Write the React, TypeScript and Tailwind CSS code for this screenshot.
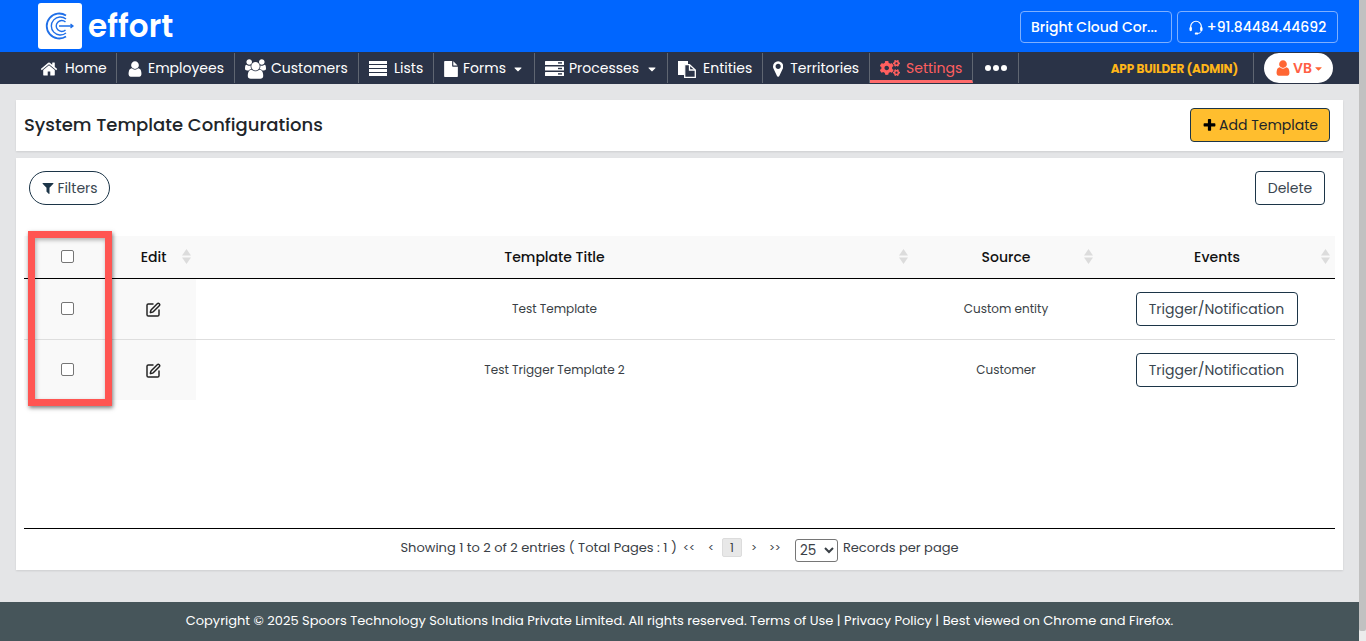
import React from "react";
import { FaCogs, FaCaretDown } from "react-icons/fa";
import { SquarePen } from "lucide-react";

const font = "font-['Poppins','Inter','Liberation_Sans',sans-serif]";

function Fa({ d, vb = "0 0 1792 1792", className = "" }: { d: string; vb?: string; className?: string }) {
  return (
    <svg viewBox={vb} fill="currentColor" className={`shrink-0 ${className}`}>
      <path d={d} />
    </svg>
  );
}

const P = {
  home: "M1472 992v480q0 26-19 45t-45 19h-384v-384h-256v384h-384q-26 0-45-19t-19-45v-480q0-1 .5-3t.5-3l575-474 575 474q1 2 1 6zm223-69l-62 74q-8 9-21 11h-3q-13 0-21-7l-692-577-692 577q-12 8-24 7-13-2-21-11l-62-74q-8-10-7-23.5t11-21.5l719-599q32-26 76-26t76 26l244 204v-195q0-14 9-23t23-9h192q14 0 23 9t9 23v408l219 182q10 8 11 21.5t-7 23.5z",
  user: "M1536 1399q0 109-62.5 187t-150.5 78h-854q-88 0-150.5-78t-62.5-187q0-85 8.5-160.5t31.5-152 58.5-131 94-89 134.5-34.5q131 128 313 128t313-128q76 0 134.5 34.5t94 89 58.5 131 31.5 152 8.5 160.5zm-256-887q0 159-112.5 271.5t-271.5 112.5-271.5-112.5-112.5-271.5 112.5-271.5 271.5-112.5 271.5 112.5 112.5 271.5z",
  users: "M593 896q-162 5-265 128h-134q-82 0-138-40.5t-56-118.5q0-353 124-353 6 0 43.5 21t97.5 42.5 119 21.5q67 0 133-23-5 37-5 66 0 139 81 256zm1071 637q0 120-73 189.5t-194 69.5h-874q-121 0-194-69.5t-73-189.5q0-53 3.5-103.5t14-109 26.5-108.5 43-97.5 62-81 85.5-53.5 111.5-20q10 0 43 21.5t73 48 107 48 135 21.5 135-21.5 107-48 73-48 43-21.5q61 0 111.5 20t85.5 53.5 62 81 43 97.5 26.5 108.5 14 109 3.5 103.5zm-1024-1277q0 106-75 181t-181 75-181-75-75-181 75-181 181-75 181 75 75 181zm704 384q0 159-112.5 271.5t-271.5 112.5-271.5-112.5-112.5-271.5 112.5-271.5 271.5-112.5 271.5 112.5 112.5 271.5zm576 225q0 78-56 118.5t-138 40.5h-134q-103-123-265-128 81-117 81-256 0-29-5-66 66 23 133 23 59 0 119-21.5t97.5-42.5 43.5-21q124 0 124 353zm-128-609q0 106-75 181t-181 75-181-75-75-181 75-181 181-75 181 75 75 181z",
  file: "M1596 476q14 14 28 36h-472v-472q22 14 36 28zm-476 164h544v1056q0 40-28 68t-68 28h-1344q-40 0-68-28t-28-68v-1600q0-40 28-68t68-28h800v544q0 40 28 68t68 28z",
  marker: "M768 640q0-106-75-181t-181-75-181 75-75 181 75 181 181 75 181-75 75-181zm256 0q0 109-33 179l-364 774q-16 33-47.5 52t-67.5 19-67.5-19-46.5-52l-365-774q-33-70-33-179 0-212 150-362t362-150 362 150 150 362z",
  filter: "M1595 295q17 41-14 70l-493 493v742q0 42-39 59-13 5-25 5-27 0-45-19l-256-256q-19-19-19-45v-486l-493-493q-31-29-14-70 17-39 59-39h1280q42 0 59 39z",
  plus: "M1600 736v192q0 40-28 68t-68 28h-416v416q0 40-28 68t-68 28h-192q-40 0-68-28t-28-68v-416h-416q-40 0-68-28t-28-68v-192q0-40 28-68t68-28h416v-416q0-40 28-68t68-28h192q40 0 68 28t28 68v416h416q40 0 68 28t28 68z",
};

function Sort() {
  return (
    <svg width="9" height="15" viewBox="0 0 9 15" className="shrink-0">
      <path d="M4.5 0 L9 6.5 H0 Z" fill="#dcdcdc" />
      <path d="M4.5 15 L9 8.5 H0 Z" fill="#dcdcdc" />
    </svg>
  );
}

function Logo() {
  return (
    <svg width="30" height="30" viewBox="0 0 30 30" fill="none" stroke="#1f6fe8" strokeWidth="1.4">
      <path d="M21 4.5 A12.5 12.5 0 1 0 21 25.5" strokeWidth="1.8" />
      <path d="M21 8 A9 9 0 1 0 21 22" />
      <path d="M20.5 11 A5.5 5.5 0 1 0 20.5 19" />
      <path d="M14 15 H28 M25.5 13 L28 15 L25.5 17" strokeWidth="1.3" />
    </svg>
  );
}

function ListIcon() {
  return (
    <svg viewBox="0 0 18 15" fill="currentColor" className="h-[15px] w-[18px] shrink-0">
      <rect x="0" y="0" width="18" height="3" />
      <rect x="0" y="4" width="18" height="3" />
      <rect x="0" y="8" width="18" height="3" />
      <rect x="0" y="12" width="18" height="3" />
    </svg>
  );
}

function ServerIcon() {
  return (
    <svg viewBox="0 0 19 15" className="h-[15px] w-[19px] shrink-0">
      <rect x="0" y="0" width="19" height="4" rx="0.5" fill="currentColor" />
      <rect x="0" y="5.5" width="19" height="4" rx="0.5" fill="currentColor" />
      <rect x="0" y="11" width="19" height="4" rx="0.5" fill="currentColor" />
      <rect x="13" y="1.2" width="4" height="1.4" fill="#2a3347" />
      <rect x="13" y="6.8" width="4" height="1.4" fill="#2a3347" />
      <rect x="13" y="12.2" width="4" height="1.4" fill="#2a3347" />
    </svg>
  );
}

function EntitiesIcon() {
  return (
    <svg viewBox="0 0 18 18" className="h-[18px] w-[18px] shrink-0">
      <path d="M0 1 H10 V4 H6 V15 H0 Z" fill="currentColor" />
      <path d="M6.7 4.7 H11.5 L17.3 10 V17.3 H6.7 Z" fill="none" stroke="currentColor" strokeWidth="1.3" />
      <path d="M11.5 5 V10 H17" fill="none" stroke="currentColor" strokeWidth="1.3" />
    </svg>
  );
}

function Headset() {
  return (
    <svg viewBox="0 0 15 16" className="h-[15px] w-[14px] shrink-0" fill="none" stroke="currentColor">
      <path d="M1.8 9 V7 A5.7 5.7 0 0 1 13.2 7 V9" strokeWidth="1.3" />
      <rect x="0.5" y="7.5" width="2.6" height="4.5" rx="1.2" fill="currentColor" stroke="none" />
      <rect x="11.9" y="7.5" width="2.6" height="4.5" rx="1.2" fill="currentColor" stroke="none" />
      <path d="M13 12 Q12.5 14.3 9.5 14.4" strokeWidth="1" />
      <rect x="6.2" y="13.4" width="3.6" height="2.2" rx="1" fill="currentColor" stroke="none" />
    </svg>
  );
}

const navItems = [
  { label: "Home", icon: <Fa d={P.home} className="h-[18px] w-[18px]" />, w: "w-[87px] pl-[10px]", gap: "gap-[7px]" },
  { label: "Employees", icon: <Fa d={P.user} className="h-[18px] w-[18px] -mx-[1px]" />, w: "w-[118px] pl-[10px]", gap: "gap-[5px]" },
  { label: "Customers", icon: <Fa d={P.users} vb="0 0 1920 1792" className="h-[20px] w-[21px]" />, w: "w-[124px] pl-[10px]", gap: "gap-[5px]" },
  { label: "Lists", icon: <ListIcon />, w: "w-[75px] pl-[10px]", gap: "gap-[7px]" },
  { label: "Forms", icon: <Fa d={P.file} className="h-[16px] w-[16px] -ml-[1px]" />, w: "w-[101px] pl-[10px]", gap: "gap-[4px]", caret: true },
  { label: "Processes", icon: <ServerIcon />, w: "w-[133px] pl-[10px]", gap: "gap-[5px]", caret: true },
  { label: "Entities", icon: <EntitiesIcon />, w: "w-[95px] pl-[10px]", gap: "gap-[7px]" },
  { label: "Territories", icon: <Fa d={P.marker} vb="0 0 1024 1792" className="h-[18px] w-[10.3px]" />, w: "w-[107px] pl-[10px]", gap: "gap-[7px]" },
];

const rows = [
  { title: "Test Template", source: "Custom entity" },
  { title: "Test Trigger Template 2", source: "Customer" },
];

export default function App() {
  return (
    <div className={`${font} flex h-[641px] w-[1366px] overflow-hidden text-[#212529]`}>
      <div className="flex w-[1359px] flex-col bg-[#e4e5e7]">
        <header className="flex h-[52px] items-center justify-between bg-[#0066ff] pl-[38px] pr-[21px]">
          <div className="flex items-center gap-[6px]">
            <div className="flex h-[46px] w-[44px] items-center justify-center rounded-[3px] bg-white">
              <Logo />
            </div>
            <span className="text-[31px] font-semibold leading-none tracking-[0.1px] text-white">effort</span>
          </div>
          <div className="mt-[2px] flex items-center gap-[5px] text-[14px] font-medium text-white">
            <div className="flex h-[32px] w-[152px] items-center rounded-[4px] border border-[#7fb0ff] pl-[10px]">Bright Cloud Cor...</div>
            <div className="flex h-[32px] w-[161px] items-center justify-center gap-[4px] rounded-[4px] border border-[#7fb0ff]">
              <Headset />
              <span>+91.84484.44692</span>
            </div>
          </div>
        </header>

        <nav className="flex h-[32px] items-stretch bg-[#2a3347] pl-[30px] text-[14px] text-white">
          {navItems.map((item) => (
            <div key={item.label} className={`my-[1px] flex items-center border-r border-[#5f6672] pt-[1px] ${item.w} ${item.gap}`}>
              <span className="flex w-auto shrink-0 items-center">{item.icon}</span>
              <span>{item.label}</span>
              {item.caret && <FaCaretDown size={12} className="ml-[2px]" />}
            </div>
          ))}
          <div className="my-[1px] flex w-[103px] items-center gap-[6px] border-r border-b-[3px] border-r-[#5f6672] border-b-[#ff6b6b] pl-[10px] pt-[3px] text-[#ff5f5f]">
            <FaCogs size={20} />
            <span>Settings</span>
          </div>
          <div className="my-[1px] flex w-[46px] items-center justify-center gap-[2px] border-r border-[#5f6672]">
            <span className="h-[6px] w-[6px] rounded-full bg-white" />
            <span className="h-[6px] w-[6px] rounded-full bg-white" />
            <span className="h-[6px] w-[6px] rounded-full bg-white" />
          </div>
          <div className="my-[1px] flex w-[235px] items-center justify-end border-r border-[#5f6672] pr-[15px] pt-[1px] text-[12px] font-bold tracking-[-0.15px] text-[#ffb619]">
            APP BUILDER (ADMIN)
          </div>
          <div className="ml-[10px] flex items-center">
            <div className="flex h-[30px] w-[69px] items-center justify-center rounded-full bg-white pl-[1px] text-[14px] font-semibold text-[#ff6633]">
              <Fa d={P.user} className="h-[18px] w-[18px]" />
              <span className="ml-[1px] text-[#ff5f45]">VB</span>
              <FaCaretDown size={11} className="ml-[1px]" />
            </div>
          </div>
        </nav>

        <main className="flex flex-1 flex-col px-[16px] pt-[16px]">
          <section className="flex h-[51px] items-start justify-between bg-white pl-[8px] pr-[13px] pt-[8px] shadow-[0_1px_2px_rgba(0,0,0,0.1)]">
            <h1 className="text-[18px] font-medium leading-[34px] text-[#212529]">System Template Configurations</h1>
            <button className="flex h-[34px] w-[140px] items-center justify-center gap-[2px] rounded-[4px] border border-[#1c3548] bg-[#ffbe2e] text-[14px] text-[#212529]">
              <Fa d={P.plus} className="h-[15px] w-[15px] text-black" />
              Add Template
            </button>
          </section>

          <section className="relative mt-[7px] h-[412px] bg-white px-[8px] pt-[13px] shadow-[0_1px_2px_rgba(0,0,0,0.1)]">
            <div className="flex items-center justify-between pl-[5px] pr-[10px]">
              <button className="flex h-[34px] w-[81px] items-center justify-center gap-[2px] rounded-full border border-[#1c3548] text-[14px] text-[#3a4650]">
                <Fa d={P.filter} className="h-[14px] w-[14px] text-[#1c3548]" />
                Filters
              </button>
              <button className="h-[34px] w-[70px] rounded-[4px] border border-[#1c3548] text-[14px] text-[#3a4650]">Delete</button>
            </div>

            <table className="mt-[31px] w-[1311px] table-fixed border-collapse">
              <colgroup>
                <col className="w-[87px]" />
                <col className="w-[85px]" />
                <col className="w-[717px]" />
                <col className="w-[185px]" />
                <col className="w-[237px]" />
              </colgroup>
              <thead>
                <tr className="h-[42px] border-b border-black bg-[#f9f9f9] text-[14px] font-medium text-[#111]">
                  <th className="font-medium">
                    <input type="checkbox" className="mx-auto block h-[13px] w-[13px] appearance-none rounded-[2px] border border-[#767676] bg-white" />
                  </th>
                  {[
                    { h: "Edit", c: "" },
                    { h: "Template Title", c: "" },
                    { h: "Source", c: "pl-[1px]" },
                    { h: "Events", c: "pl-[1px]" },
                  ].map(({ h, c }) => (
                    <th key={h} className={`relative pt-[2px] font-medium ${c}`}>
                      <span>{h}</span>
                      <span className="absolute right-[5px] top-[13px]"><Sort /></span>
                    </th>
                  ))}
                </tr>
              </thead>
              <tbody>
                {rows.map((r) => (
                  <tr key={r.title} className="h-[61px] border-b border-[#dedede] text-[12px] text-[#3a3f45] last:border-b-0">
                    <td className="bg-[#f9f9f9]">
                      <input type="checkbox" className="mx-auto block h-[13px] w-[13px] appearance-none rounded-[2px] border border-[#767676] bg-white" />
                    </td>
                    <td className="bg-[#f9f9f9] pr-[1px] pt-[3px]">
                      <SquarePen size={16} strokeWidth={2.2} className="mx-auto block text-[#222]" />
                    </td>
                    <td className="text-center">{r.title}</td>
                    <td className="pl-[1px] text-center">{r.source}</td>
                    <td className="text-center">
                      <button className="mx-auto h-[34px] w-[162px] rounded-[4px] border border-[#1c3548] pt-[2px] text-[14px] text-[#3a4650]">Trigger/Notification</button>
                    </td>
                  </tr>
                ))}
              </tbody>
            </table>

            <div className="absolute left-[12px] top-[73px] h-[175px] w-[84px] border-[7px] border-[#ff5552] shadow-[1px_2px_4px_rgba(0,0,0,0.5),inset_1px_2px_4px_rgba(0,0,0,0.3)]" />

            <div className="absolute bottom-0 left-[8px] right-[8px] flex h-[42px] items-center justify-center border-t border-black pb-[4px] text-[13px] text-[#3a4046]">
              <span>Showing 1 to 2 of 2 entries ( Total Pages : 1 )</span>
              <span className="ml-[6px] w-[25px] text-[11px]">&lt;&lt;</span>
              <span className="w-[14px] text-[11px]">&lt;</span>
              <span className="flex h-[19px] w-[20px] items-center justify-center rounded-[2px] border border-[#dcdcdc] bg-[#e8e8e8] text-[12px]">1</span>
              <span className="ml-[9px] w-[18px] text-[11px]">&gt;</span>
              <span className="w-[26px] text-[11px]">&gt;&gt;</span>
              <select className="mt-[6px] h-[23px] w-[43px] rounded-[3px] border border-[#767676] bg-white text-[13.5px]" defaultValue="25">
                <option>25</option>
              </select>
              <span className="ml-[5px]">Records per page</span>
            </div>
          </section>

          <div className="flex-1" />
        </main>

        <footer className="flex h-[39px] items-center justify-center bg-[#46555a] pb-[2px] text-[13px] text-white">
          Copyright © 2025 Spoors Technology Solutions India Private Limited. All rights reserved. Terms of Use | Privacy Policy | Best viewed on Chrome and Firefox.
        </footer>
      </div>
      <div className="flex w-[7px] flex-col bg-[#ececec]">
        <div className="h-[631px] rounded-b-[2px] bg-[#c1c1c1]" />
      </div>
    </div>
  );
}
